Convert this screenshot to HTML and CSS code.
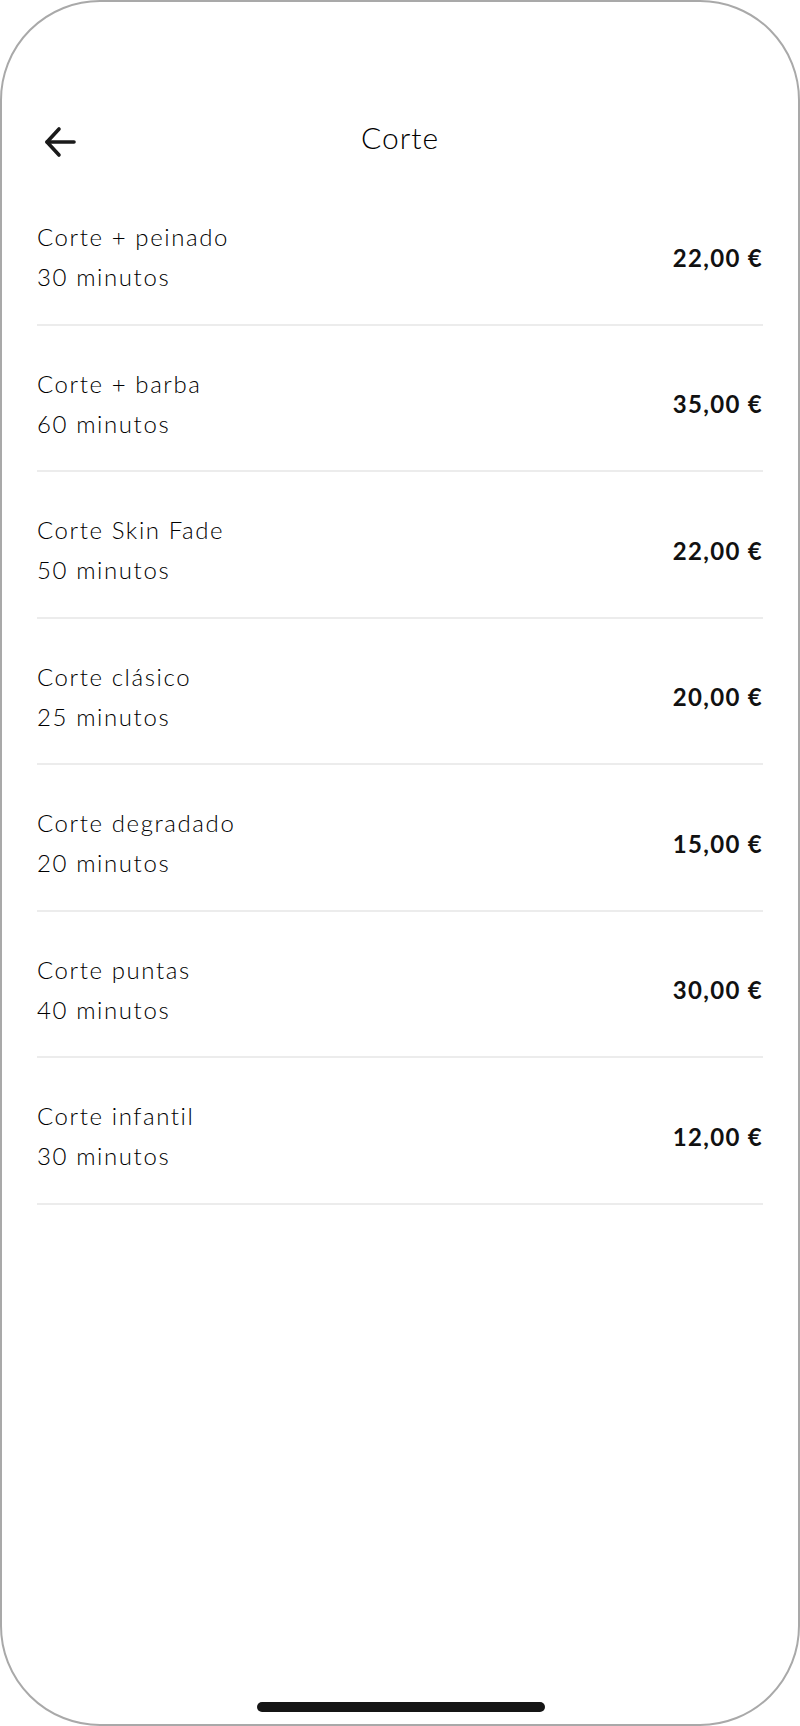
FILE: index.html
```html
<!DOCTYPE html>
<html lang="es">
<head>
<meta charset="utf-8">
<title>Corte</title>
<link rel="stylesheet" href="styles.css">
</head>
<body>
<div class="phone">
  <header class="header">
    <button class="back" aria-label="Volver">
      <svg width="34" height="32" viewBox="0 0 34 32" fill="none" stroke="#1a1a1a" stroke-width="3.6" stroke-linecap="round" stroke-linejoin="round">
        <path d="M31 16H4"/>
        <path d="M16 3L4 16l12 13"/>
      </svg>
    </button>
    <h1 class="title">Corte</h1>
  </header>
  <ul class="list">
    <li class="item"><div class="info"><span class="name">Corte + peinado</span><span class="dur">30 minutos</span></div><span class="price">22,00 €</span></li>
    <li class="item"><div class="info"><span class="name">Corte + barba</span><span class="dur">60 minutos</span></div><span class="price">35,00 €</span></li>
    <li class="item"><div class="info"><span class="name">Corte Skin Fade</span><span class="dur">50 minutos</span></div><span class="price">22,00 €</span></li>
    <li class="item"><div class="info"><span class="name">Corte clásico</span><span class="dur">25 minutos</span></div><span class="price">20,00 €</span></li>
    <li class="item"><div class="info"><span class="name">Corte degradado</span><span class="dur">20 minutos</span></div><span class="price">15,00 €</span></li>
    <li class="item"><div class="info"><span class="name">Corte puntas</span><span class="dur">40 minutos</span></div><span class="price">30,00 €</span></li>
    <li class="item"><div class="info"><span class="name">Corte infantil</span><span class="dur">30 minutos</span></div><span class="price">12,00 €</span></li>
  </ul>
  <div class="home-indicator"></div>
</div>
</body>
</html>
```

FILE: styles.css
```css
* { box-sizing: border-box; }
html, body { margin: 0; padding: 0; background: #fff; }
body { font-family: "Lato", "Liberation Sans", sans-serif; color: #000; }

.phone {
  position: relative;
  width: 800px;
  height: 1726px;
  border: 2px solid #a9a9a9;
  border-radius: 100px;
  background: #fff;
  overflow: hidden;
  padding: 0 35px;
}

.header {
  position: relative;
  height: 177px;
  display: flex;
  align-items: flex-start;
  justify-content: center;
}

.back {
  position: absolute;
  left: 6px;
  top: 124px;
  padding: 0;
  border: 0;
  background: none;
  display: flex;
}

.title {
  margin: 0;
  padding-top: 115px;
  font-size: 30px;
  line-height: 40px;
  font-weight: 300;
  letter-spacing: 1px;
  color: #000;
}

.list { list-style: none; margin: 0; padding: 0; }

.item {
  display: flex;
  align-items: center;
  justify-content: space-between;
  padding: 38px 0 26.5px;
  border-bottom: 2px solid #ececec;
}

.info { display: flex; flex-direction: column; }

.name, .dur {
  font-size: 24px;
  line-height: 40px;
  font-weight: 300;
  letter-spacing: 1.6px;
  color: #000;
}

.price {
  font-size: 24px;
  font-weight: 700;
  letter-spacing: 1.3px;
  color: #111;
}

.home-indicator {
  position: absolute;
  left: 255px;
  bottom: 12px;
  width: 288px;
  height: 10px;
  border-radius: 5px;
  background: #151515;
}
```
